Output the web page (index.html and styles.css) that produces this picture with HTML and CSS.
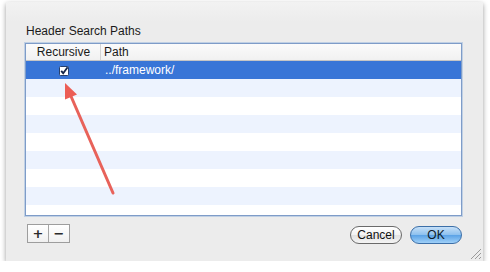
FILE: index.html
```html
<!DOCTYPE html>
<html>
<head>
<meta charset="utf-8">
<link rel="stylesheet" href="styles.css">
</head>
<body>
<div class="dialog">
  <div class="title">Header Search Paths</div>
  <div class="table">
    <div class="row head">
      <div class="c1">Recursive</div>
      <div class="c2">Path</div>
    </div>
    <div class="row sel">
      <div class="c1">
        <svg class="check" width="10" height="10" viewBox="0 0 10 10">
          <rect x="0.5" y="0.5" width="9" height="9" rx="1" fill="#ffffff" stroke="#27406e"/>
          <path d="M2.2 4.8 L4.2 7.2 L8.6 1.2" fill="none" stroke="#13254a" stroke-width="1.8"/>
        </svg>
      </div>
      <div class="c2">../framework/</div>
    </div>
    <div class="row alt"></div>
    <div class="row"></div>
    <div class="row alt"></div>
    <div class="row"></div>
    <div class="row alt"></div>
    <div class="row"></div>
    <div class="row alt"></div>
    <div class="row"></div>
  </div>
  <div class="bottom">
    <div class="seg">
      <div class="segbtn">+</div>
      <div class="segbtn">−</div>
    </div>
    <div class="actions">
      <div class="btn cancel">Cancel</div>
      <div class="btn ok">OK</div>
    </div>
  </div>
  <svg class="grip" width="12" height="12" viewBox="0 0 12 12">
    <path d="M1 11 L11 1 M5 11 L11 5 M9 11 L11 9" stroke="#9a9a9a" stroke-width="1"/>
  </svg>
</div>
<svg class="arrow" width="490" height="272" viewBox="0 0 490 272">
  <line x1="113" y1="193" x2="70" y2="94" stroke="#e8625a" stroke-width="3" stroke-linecap="round"/>
  <path d="M65 83 L77 94.5 L65 99.5 Z" fill="#ec5d55"/>
</svg>
</body>
</html>
```
FILE: styles.css
```css
html, body {
  margin: 0;
  background: #ffffff;
}
body {
  padding: 2px 0 0 6px;
  font-family: "Liberation Sans", Arial, sans-serif;
  font-size: 12px;
  color: #1a1a1a;
}
.dialog {
  position: relative;
  width: 477px;
  height: 259px;
  box-sizing: border-box;
  padding: 22px 21px 0 19px;
  background: linear-gradient(#f2f2f2, #ececec 20px, #ececec);
  box-shadow: 0 2px 5px rgba(0, 0, 0, 0.4);
  display: flex;
  flex-direction: column;
}
.title {
  height: 14px;
  line-height: 14px;
  padding-left: 1px;
}
.table {
  margin-top: 5px;
  width: 437px;
  height: 173px;
  box-sizing: border-box;
  border: 1px solid #7e9cc8;
  box-shadow: 0 0 0 1px rgba(140, 175, 220, 0.45);
  background: #ffffff;
  overflow: hidden;
  display: flex;
  flex-direction: column;
}
.row {
  height: 18px;
  flex: none;
  display: flex;
  align-items: center;
}
.row.alt {
  background: #edf3fe;
}
.row.head {
  height: 16px;
  border-bottom: 1px solid #c5c5c5;
  background: linear-gradient(#fbfbfb, #f1f1f1);
}
.c1 {
  width: 74px;
  height: 100%;
  display: flex;
  align-items: center;
  justify-content: center;
  padding-left: 1px;
  box-sizing: content-box;
}
.head .c1 {
  border-right: 1px solid #d4d4d4;
  width: 73px;
}
.c2 {
  padding-left: 3px;
  line-height: 16px;
}
.sel .c2 {
  padding-left: 4px;
  padding-top: 0;
}
.row.sel {
  background: #3875d7;
  color: #ffffff;
}
.check {
  display: block;
  margin-top: 1px;
}
.bottom {
  margin-top: 8px;
  display: flex;
  justify-content: space-between;
  align-items: flex-start;
}
.seg {
  margin-left: 2px;
  display: flex;
  height: 19px;
  border: 1px solid #9d9d9d;
  box-sizing: border-box;
  background: linear-gradient(#ffffff, #f0f0f0);
}
.segbtn {
  width: 20px;
  height: 17px;
  line-height: 17px;
  text-align: center;
  font-family: "DejaVu Sans", sans-serif;
  font-weight: bold;
  font-size: 13px;
  color: #2a2a2a;
}
.segbtn + .segbtn {
  border-left: 1px solid #a5a5a5;
}
.actions {
  display: flex;
  gap: 8px;
  margin-top: 2px;
}
.btn {
  width: 52px;
  height: 18px;
  box-sizing: border-box;
  border-radius: 9px;
  text-align: center;
  line-height: 16px;
  font-size: 12px;
}
.cancel {
  border: 1px solid #6a6a6a;
  background: linear-gradient(#ffffff, #f3f3f3 50%, #e2e2e2 51%, #f4f4f4);
  color: #111111;
}
.ok {
  border: 1px solid #3c6fa8;
  background: linear-gradient(#c6e0f8, #8cc0ee 50%, #5aa2e6 51%, #9fd0f8);
  color: #0d1a2b;
}
.grip {
  position: absolute;
  right: 1px;
  bottom: 1px;
}
.arrow {
  position: absolute;
  left: 0;
  top: 0;
  pointer-events: none;
}
```
